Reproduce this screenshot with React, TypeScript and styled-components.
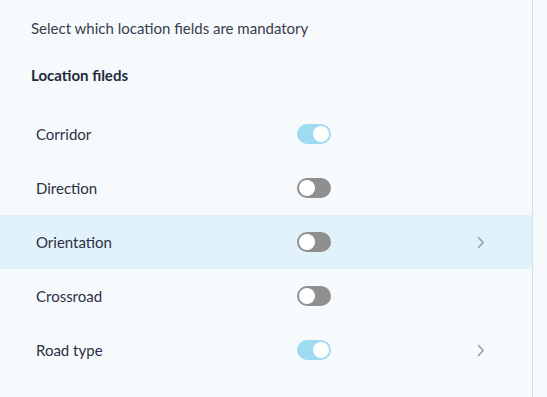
import React from "react";
import styled, { createGlobalStyle } from "styled-components";

const Global = createGlobalStyle`
  html, body { margin: 0; padding: 0; background: #f7fafc; }
  body { font-family: Lato, "Open Sans", sans-serif; color: #2b3044; }
`;

const Page = styled.div`
  display: flex;
  width: 547px;
  height: 397px;
  background: #f7fafc;
`;

const Panel = styled.section`
  width: 533px;
  height: 397px;
  border-right: 1px solid #d3e1ea;
  box-sizing: border-box;
  background: #f7fafc;
`;

const Intro = styled.p`
  margin: 0;
  padding: 18px 0 0 31px;
  font-size: 15px;
  line-height: 20px;
  color: #383d4f;
`;

const SectionTitle = styled.h3`
  margin: 0;
  padding: 27px 0 0 31px;
  font-size: 15px;
  line-height: 20px;
  font-weight: 700;
  color: #232a3f;
`;

const List = styled.ul`
  list-style: none;
  margin: 0;
  padding: 22px 0 0;
`;

const Row = styled.li<{ $active?: boolean }>`
  display: grid;
  grid-template-columns: 261px 34px 1fr;
  align-items: center;
  height: 54px;
  padding-left: 36px;
  background: ${(p) => (p.$active ? "#e2f2fb" : "transparent")};
`;

const Label = styled.span`
  font-size: 15px;
  color: #2b3044;
`;

const Toggle = styled.span<{ $on?: boolean }>`
  position: relative;
  display: block;
  width: 34px;
  height: 20px;
  border-radius: 10px;
  background: ${(p) => (p.$on ? "#9edaf0" : "#8f8f8f")};
  &::after {
    content: "";
    position: absolute;
    top: 2px;
    left: ${(p) => (p.$on ? "16px" : "2px")};
    width: 16px;
    height: 16px;
    border-radius: 50%;
    background: #fff;
  }
`;

const Chevron = styled.span`
  justify-self: end;
  margin-right: 47px;
  display: flex;
`;

const fields = [
  { name: "Corridor", on: true, more: false },
  { name: "Direction", on: false, more: false },
  { name: "Orientation", on: false, more: true, active: true },
  { name: "Crossroad", on: false, more: false },
  { name: "Road type", on: true, more: true },
];

export default function App() {
  return (
    <>
      <Global />
      <Page>
        <Panel>
          <Intro>Select which location fields are mandatory</Intro>
          <SectionTitle>Location fileds</SectionTitle>
          <List>
            {fields.map((f) => (
              <Row key={f.name} $active={f.active}>
                <Label>{f.name}</Label>
                <Toggle $on={f.on} />
                {f.more ? (
                  <Chevron>
                    <svg width="8" height="13" viewBox="0 0 8 13" fill="none">
                      <path d="M1.5 1.5 L6.2 6.5 L1.5 11.5" stroke="#8c9ba7" strokeWidth="1.4" strokeLinecap="round" strokeLinejoin="round" />
                    </svg>
                  </Chevron>
                ) : (
                  <span />
                )}
              </Row>
            ))}
          </List>
        </Panel>
      </Page>
    </>
  );
}
